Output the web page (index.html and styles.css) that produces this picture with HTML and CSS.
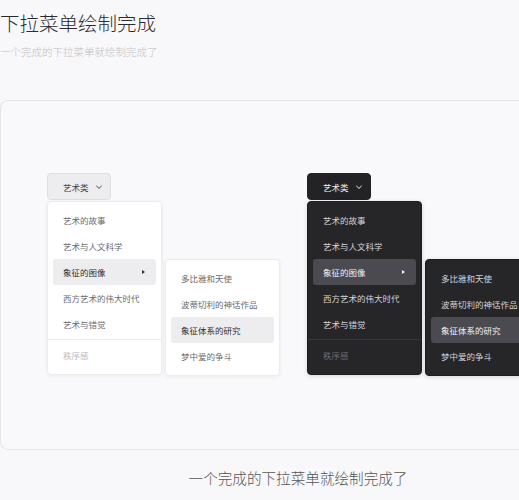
FILE: index.html
```html
<!DOCTYPE html>
<html lang="zh">
<head>
<meta charset="utf-8">
<title>下拉菜单绘制完成</title>
<link rel="stylesheet" href="styles.css">
</head>
<body>
<div class="page">
  <h1 class="title">下拉菜单绘制完成</h1>
  <p class="subtitle">一个完成的下拉菜单就绘制完成了</p>
  <div class="card">
    <div class="demos">
      <div class="dd light">
        <button class="dd-btn">艺术类<svg class="chev" width="8" height="8" viewBox="0 0 8 8"><path d="M1.3 2.8 L4 5.4 L6.7 2.8" fill="none" stroke="currentColor" stroke-width="1"/></svg></button>
        <ul class="menu">
          <li class="item">艺术的故事</li>
          <li class="item">艺术与人文科学</li>
          <li class="item active has-sub">象征的图像<span class="tri"></span>
            <ul class="menu sub">
              <li class="item">多比雅和天使</li>
              <li class="item">波蒂切利的神话作品</li>
              <li class="item active">象征体系的研究</li>
              <li class="item">梦中爱的争斗</li>
            </ul>
          </li>
          <li class="item">西方艺术的伟大时代</li>
          <li class="item">艺术与错觉</li>
          <li class="divider"></li>
          <li class="item disabled">秩序感</li>
        </ul>
      </div>
      <div class="dd dark">
        <button class="dd-btn">艺术类<svg class="chev" width="8" height="8" viewBox="0 0 8 8"><path d="M1.3 2.8 L4 5.4 L6.7 2.8" fill="none" stroke="currentColor" stroke-width="1"/></svg></button>
        <ul class="menu">
          <li class="item">艺术的故事</li>
          <li class="item">艺术与人文科学</li>
          <li class="item active has-sub">象征的图像<span class="tri"></span>
            <ul class="menu sub">
              <li class="item">多比雅和天使</li>
              <li class="item">波蒂切利的神话作品</li>
              <li class="item active">象征体系的研究</li>
              <li class="item">梦中爱的争斗</li>
            </ul>
          </li>
          <li class="item">西方艺术的伟大时代</li>
          <li class="item">艺术与错觉</li>
          <li class="divider"></li>
          <li class="item disabled">秩序感</li>
        </ul>
      </div>
    </div>
  </div>
  <p class="caption">一个完成的下拉菜单就绘制完成了</p>
</div>
</body>
</html>
```
FILE: styles.css
```css
html, body {
  margin: 0;
  padding: 0;
  background: #f8f8fa;
}
body {
  font-family: "Noto Sans CJK SC", "Noto Sans", sans-serif;
  color: #333;
}
.page {
  width: 519px;
  overflow: hidden;
}
.title {
  margin: 0;
  padding-top: 9px;
  font-size: 19.5px;
  line-height: 28px;
  font-weight: 300;
  color: #2b2b2e;
}
.subtitle {
  margin: 7px 0 0;
  font-size: 10.5px;
  line-height: 16px;
  font-weight: 300;
  color: #c0c0c4;
}
.card {
  margin-top: 40px;
  height: 348px;
  border: 1px solid #e6e6ea;
  border-right: none;
  border-radius: 8px 0 0 8px;
  background: #f9f9fb;
  overflow: hidden;
}
.demos {
  display: flex;
  gap: 196px;
  padding: 72px 0 0 46px;
}
.dd {
  width: 64px;
  position: relative;
}
.dd-btn {
  display: flex;
  align-items: center;
  gap: 6px;
  width: 64px;
  height: 27px;
  padding: 0 0 0 15px;
  box-sizing: border-box;
  border-radius: 4px;
  font-family: inherit;
  font-size: 8.5px;
  cursor: pointer;
}
.chev { display: block; }
.menu {
  list-style: none;
  margin: 1px 0 0;
  padding: 5px 5px 6px;
  width: 115px;
  box-sizing: border-box;
  border-radius: 4px;
  font-size: 8.5px;
}
.item {
  position: relative;
  height: 26px;
  line-height: 26px;
  padding-left: 10px;
  border-radius: 3px;
  white-space: nowrap;
}
.tri {
  position: absolute;
  right: 11px;
  top: 11px;
  width: 0;
  height: 0;
  border-top: 2.5px solid transparent;
  border-bottom: 2.5px solid transparent;
  border-left: 3px solid currentColor;
}
.divider {
  height: 1px;
  margin: 2px -5px 2px;
}
.sub {
  position: absolute;
  top: 0;
  left: calc(100% + 9px);
  margin: 0;
  width: 115px;
}

/* light */
.light .dd-btn {
  background: #ededef;
  border: 1px solid #dedee2;
  color: #444;
}
.light .menu {
  background: #fff;
  border: 1px solid #ececef;
  box-shadow: 0 1px 4px rgba(0,0,0,0.06);
}
.light .item { color: #6a6a70; }
.light .item.active { background: #ededef; color: #2e2e33; }
.light .sub .item { color: #6a6a70; }
.light .sub .item.active { color: #2e2e33; }
.light .divider { background: #ececef; }
.light .item.disabled { color: #bdbdc2; }

/* dark */
.dark .dd-btn {
  background: #232326;
  border: 1px solid #232326;
  color: #f0f0f2;
}
.dark .menu {
  background: #262629;
  border: 1px solid #1e1e21;
  box-shadow: 0 1px 4px rgba(0,0,0,0.15);
}
.dark .item { color: #d4d4d8; }
.dark .item.active { background: #4a4a50; color: #f2f2f4; }
.dark .sub .item { color: #d4d4d8; }
.dark .sub .item.active { color: #f2f2f4; }
.dark .divider { background: #38383c; }
.dark .item.disabled { color: #6a6a70; }

.caption {
  margin: 18px 0 0;
  padding-left: 77px;
  text-align: center;
  font-size: 14.6px;
  line-height: 20px;
  font-weight: 300;
  color: #555558;
}
```
